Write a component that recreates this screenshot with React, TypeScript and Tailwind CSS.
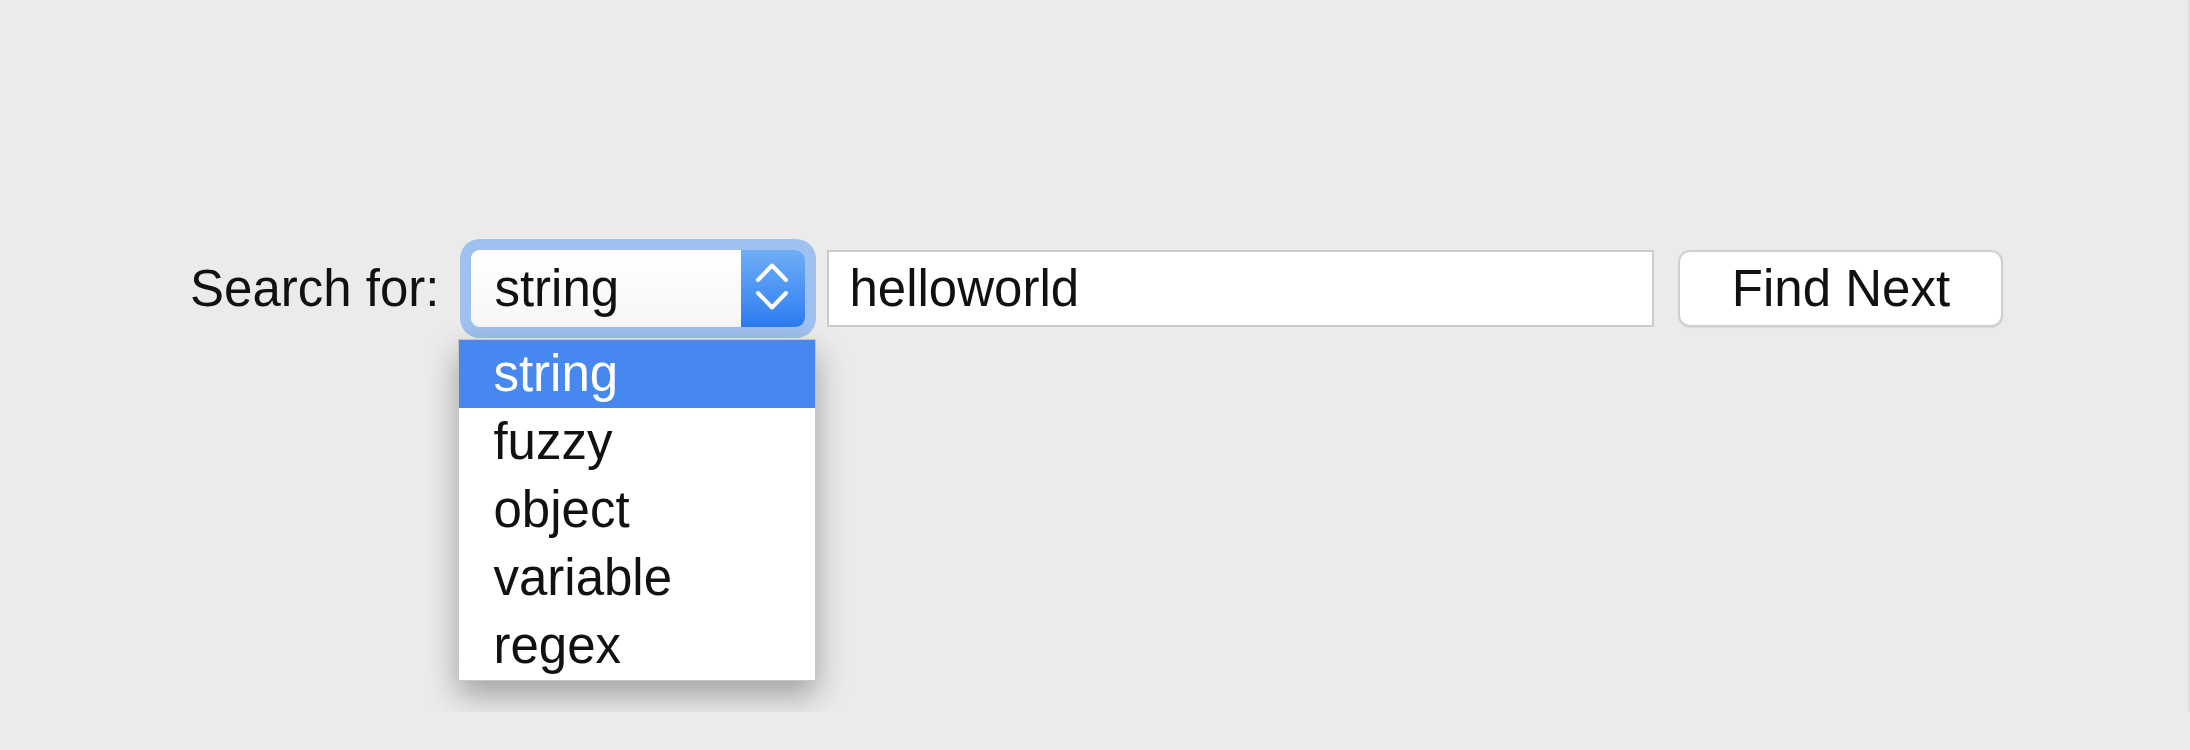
import { useState } from "react";

const options = ["string", "fuzzy", "object", "variable", "regex"];

export default function App() {
  const [mode] = useState("string");
  const [query, setQuery] = useState("helloworld");

  return (
    <main className="min-h-screen bg-[#ebebeb] font-['Liberation_Sans',Arial,sans-serif] text-[#111]">
      <div className="h-[712px] overflow-hidden border-r-2 border-[#dedede] pt-[250px] pl-[190px]">
        <div className="flex items-center h-[77px] text-[51px]">
          <span className="leading-[77px] mr-[32px]">Search for:</span>

          {/* Select with focus ring + open menu */}
          <div className="relative">
            <div className="flex h-[77px] w-[334px] rounded-[9px] bg-white shadow-[0_0_0_11px_#9fc1ef]">
              <div className="flex-1 flex items-center pl-[23px] rounded-l-[9px] bg-gradient-to-b from-white to-[#f7f7f7]">
                <span className="leading-[77px]">{mode}</span>
              </div>
              <div className="w-[64px] shrink-0 rounded-r-[9px] bg-gradient-to-b from-[#6eaef6] to-[#2d7bf0]">
                <svg width="64" height="77" viewBox="0 0 64 77" fill="none" stroke="white" strokeWidth="4" strokeLinecap="round" strokeLinejoin="round">
                  <polyline points="17,30 31,15.5 45,30" />
                  <polyline points="17,43 31,57.5 45,43" />
                </svg>
              </div>
            </div>

            {/* Dropdown list */}
            <ul className="absolute left-[-13px] top-[89px] w-[358px] bg-white border border-[#c6c6c6] shadow-[0_14px_30px_rgba(0,0,0,0.32)] z-10">
              {options.map((opt) => (
                <li
                  key={opt}
                  className={`h-[68px] leading-[68px] pl-[34px] ${
                    opt === mode ? "bg-[#4687f0] text-white" : "text-[#111]"
                  }`}
                >
                  {opt}
                </li>
              ))}
            </ul>
          </div>

          <input
            type="text"
            value={query}
            onChange={(e) => setQuery(e.target.value)}
            className="ml-[22px] h-[77px] w-[827px] px-[20px] bg-white border-2 border-[#cbcbcb] text-[51px] text-[#111] focus:outline-none"
          />

          <button className="ml-[24px] h-[77px] w-[325px] rounded-[12px] bg-white border-2 border-[#cfcfcf] shadow-[0_1px_1px_rgba(0,0,0,0.08)] text-[51px] leading-[73px] text-[#111]">
            Find Next
          </button>
        </div>
      </div>
    </main>
  );
}
